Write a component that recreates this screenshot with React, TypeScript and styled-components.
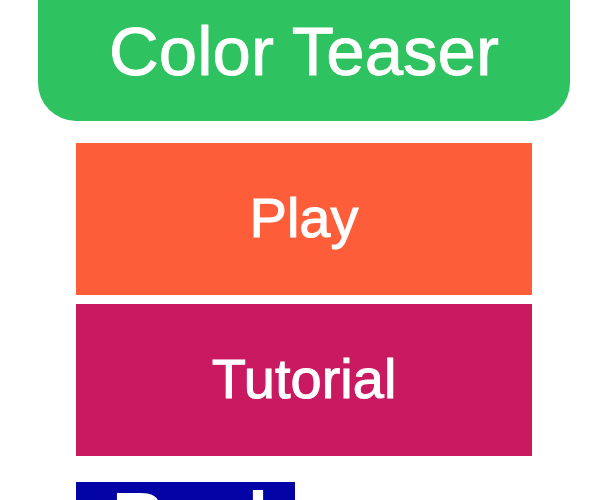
import styled, { createGlobalStyle } from "styled-components";

const GlobalStyle = createGlobalStyle`
  html, body {
    margin: 0;
    padding: 0;
    background: #fff;
    overflow: hidden;
  }
  body {
    font-family: "Liberation Sans", Arial, sans-serif;
  }
`;

const Page = styled.div`
  width: 608px;
  height: 500px;
  overflow: hidden;
  display: flex;
  flex-direction: column;
  align-items: flex-start;
`;

const Banner = styled.h1`
  flex-shrink: 0;
  box-sizing: border-box;
  margin: 0 38px;
  width: 532px;
  height: 121px;
  padding-bottom: 18px;
  background: #2ec260;
  border-radius: 0 0 38px 38px;
  color: #fff;
  font-size: 69px;
  font-weight: normal;
  display: flex;
  align-items: center;
  justify-content: center;
  -webkit-text-stroke: 0.8px #fff;
`;

const Menu = styled.div`
  flex-shrink: 0;
  margin: 22px 0 0 76px;
  display: flex;
  flex-direction: column;
  align-items: flex-start;
`;

const MenuButton = styled.button<{ $bg: string; $wide?: boolean; $gap?: number }>`
  flex-shrink: 0;
  box-sizing: border-box;
  width: ${(p) => (p.$wide === false ? "219px" : "456px")};
  height: 152px;
  margin-bottom: ${(p) => p.$gap ?? 9}px;
  border: none;
  background: ${(p) => p.$bg};
  color: #fff;
  font-family: "Liberation Sans", Arial, sans-serif;
  font-size: 56px;
  display: flex;
  align-items: center;
  justify-content: center;
  -webkit-text-stroke: 1px #fff;
  padding: 0 0 4px;
`;

const BackButton = styled(MenuButton)`
  align-items: flex-start;
  justify-content: flex-start;
  padding: 0 0 0 36px;
  font-size: 74px;
  line-height: 1;
  font-weight: bold;
  -webkit-text-stroke: 0;
`;

export default function App() {
  return (
    <Page>
      <GlobalStyle />
      <Banner>Color Teaser</Banner>
      <Menu>
        <MenuButton $bg="#fe5d3a">Play</MenuButton>
        <MenuButton $bg="#c91a61" $gap={26}>
          Tutorial
        </MenuButton>
        <BackButton $bg="#0303a6" $wide={false}>
          Back
        </BackButton>
      </Menu>
    </Page>
  );
}
